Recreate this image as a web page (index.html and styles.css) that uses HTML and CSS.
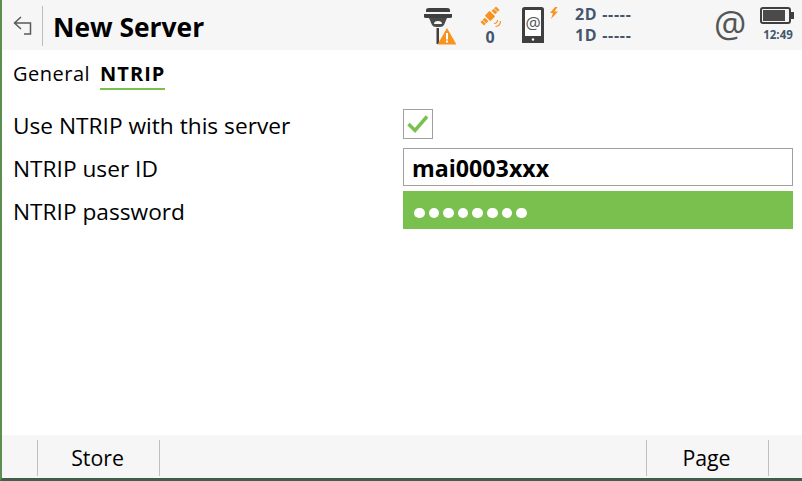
FILE: index.html
```html
<!DOCTYPE html>
<html lang="en">
<head>
<meta charset="utf-8">
<title>New Server</title>
<link rel="stylesheet" href="styles.css">
</head>
<body>
<div class="app">
  <header class="topbar">
    <button class="back" aria-label="Back">
      <svg width="24" height="24" viewBox="0 0 24 24" fill="none" stroke="#5a5a5a" stroke-width="1.500"><path d="M10 3 3.500 9 10 15M3.500 9H19.500V20H13"/></svg>
    </button>
    <h1 class="title">New Server</h1>
    <div class="status">
      <svg class="ic-rover" width="36" height="44" viewBox="0 0 36 44">
        <path d="M6 7Q6 5 9 5H27Q30 5 30 7V9H6Z" fill="#3f3f3f"/>
        <path d="M4 11H32V14Q32 15 30 15H6Q4 15 4 14Z" fill="#3f3f3f"/>
        <path d="M9 15H27L24 22Q23 24 20 24H16Q13 24 12 22Z" fill="#4a4a4a"/>
        <path d="M14 21Q14 18 18 18Q22 18 22 21Z" fill="#f6f6f6"/>
        <rect x="16.500" y="25" width="2.500" height="16" fill="#3f3f3f"/>
        <path d="M27 25 36.500 41.500H17.500Z" fill="#f7931e"/>
        <rect x="26" y="30" width="2" height="6.500" fill="#fff"/>
        <rect x="26" y="37.500" width="2" height="2" fill="#fff"/>
      </svg>
      <div class="sat">
        <svg width="24" height="24" viewBox="0 0 24 24">
          <g fill="#f7931e" transform="rotate(-45 12 11)">
            <rect x="8.500" y="7" width="7" height="8" rx="1"/>
            <rect x="1" y="8.500" width="2.600" height="5"/>
            <rect x="4.200" y="8.500" width="3" height="5"/>
            <rect x="16.800" y="8.500" width="3" height="5"/>
            <rect x="20.400" y="8.500" width="2.600" height="5"/>
          </g>
          <path d="M17.500 21.500Q22.500 21 22.500 16M16 18.500Q19.500 18.500 19.500 15" fill="none" stroke="#f7931e" stroke-width="1.200"/>
        </svg>
        <span class="sat-n">0</span>
      </div>
      <svg class="ic-phone" width="24" height="38" viewBox="0 0 24 38">
        <rect x="1.500" y="1.500" width="19" height="33" rx="1" fill="#fff" stroke="#3f3f3f" stroke-width="3"/>
        <rect x="0" y="29" width="22" height="7" fill="#3f3f3f"/>
        <circle cx="11" cy="32.500" r="1.200" fill="#fff"/>
        <text x="11" y="22" class="phone-at">@</text>
      </svg>
      <svg class="ic-bolt" width="10" height="12" viewBox="0 0 10 12"><path d="M6 0 1 6H4L2 12 9 4.500H5.500L8.500 0Z" fill="#f7931e"/></svg>
      <div class="dims">
        <span>2D -----</span>
        <span>1D -----</span>
      </div>
      <span class="at">@</span>
      <div class="batt">
        <svg width="36" height="18" viewBox="0 0 36 18" fill="none">
          <rect x="1" y="1" width="29" height="15" rx="2" stroke="#3f3f3f" stroke-width="2"/>
          <rect x="3" y="3" width="22" height="11" fill="#4a4a4a"/>
          <rect x="31" y="5" width="3" height="7" fill="#3f3f3f"/>
        </svg>
        <span class="time">12:49</span>
      </div>
    </div>
  </header>

  <nav class="tabs">
    <span class="tab">General</span>
    <span class="tab active">NTRIP</span>
  </nav>

  <main class="form">
    <div class="row">
      <label class="label">Use NTRIP with this server</label>
      <div class="check">
        <svg width="24" height="24" viewBox="0 0 24 24" fill="none"><path d="M2.500 12 9 18.500 21 4.500" stroke="#7ac04e" stroke-width="3.500"/></svg>
      </div>
    </div>
    <div class="row">
      <label class="label">NTRIP user ID</label>
      <div class="field">mai0003xxx</div>
    </div>
    <div class="row">
      <label class="label">NTRIP password</label>
      <div class="field pass">
        <i></i><i></i><i></i><i></i><i></i><i></i><i></i><i></i>
      </div>
    </div>
  </main>

  <footer class="softkeys">
    <div class="key small"></div>
    <div class="key store">Store</div>
    <div class="key grow"></div>
    <div class="key page">Page</div>
    <div class="key last"></div>
  </footer>
</div>
</body>
</html>
```

FILE: styles.css
```css
* { box-sizing: border-box; }
html, body { margin: 0; padding: 0; }
body {
  width: 802px;
  height: 481px;
  overflow: hidden;
  font-family: "Open Sans", "Noto Sans", sans-serif;
  color: #000;
  background: #fff;
}
.app {
  width: 802px;
  height: 481px;
  display: flex;
  flex-direction: column;
  border-left: 2px solid #5c8f4f;
  border-bottom: 3px solid #3f5f4a;
}
.topbar {
  height: 50px;
  flex: none;
  display: flex;
  align-items: center;
  background: #f6f6f6;
}
.back {
  width: 41px;
  height: 40px;
  flex: none;
  margin-top: 2px;
  padding: 0 0 1px 9px;
  display: flex;
  align-items: center;
  background: none;
  border: 0;
  border-right: 1px solid #bdbdbd;
}
.title {
  margin: 4px 0 0 10px;
  font-size: 26.400px;
  line-height: 34px;
  font-weight: 700;
  width: 367px;
  flex: none;
}
.status { display: flex; align-items: flex-start; height: 50px; }
.ic-rover { margin-top: 3px; flex: none; }
.sat {
  margin-left: 19px;
  width: 30px;
  display: flex;
  flex-direction: column;
  align-items: center;
  padding-top: 5px;
}
.sat-n {
  font-size: 16px;
  line-height: 16px;
  font-weight: 700;
  color: #44566b;
}
.ic-phone { margin: 7px 0 0 17px; flex: none; }
.phone-at {
  font-family: "Open Sans", sans-serif;
  font-size: 17px;
  fill: #555;
  text-anchor: middle;
}
.ic-bolt { margin: 7px 0 0 3px; flex: none; }
.dims {
  margin: 4px 0 0 16px;
  width: 139px;
  display: flex;
  flex-direction: column;
  font-size: 16px;
  line-height: 21px;
  letter-spacing: .7px;
  font-weight: 700;
  color: #44566b;
}
.at {
  margin-top: 3px;
  width: 46px;
  font-size: 36px;
  line-height: 42px;
  color: #555;
}
.batt {
  display: flex;
  flex-direction: column;
  align-items: center;
  padding-top: 7px;
  width: 36px;
}
.time {
  margin-top: 3px;
  font-size: 11.500px;
  line-height: 14px;
  font-weight: 700;
  color: #44566b;
}
.tabs {
  height: 41px;
  flex: none;
  display: flex;
  gap: 10px;
  padding: 10px 0 0 11px;
}
.tab {
  font-size: 20px;
  line-height: 28px;
  height: 30px;
  letter-spacing: .5px;
}
.tab.active {
  font-weight: 700;
  letter-spacing: 1px;
  border-bottom: 2px solid #7ac04e;
}
.form {
  flex: 1;
  padding: 14px 9px 0 11px;
  display: flex;
  flex-direction: column;
  gap: 5px;
}
.row {
  height: 38px;
  display: flex;
  align-items: center;
  justify-content: space-between;
}
.label { font-size: 22.700px; padding-top: 2px; }
.check {
  width: 30px;
  height: 30px;
  margin-right: 360px;
  border: 1px solid #a0a0a0;
  display: flex;
  align-items: center;
  justify-content: center;
}
.field {
  width: 390px;
  height: 38px;
  border: 1px solid #a0a0a0;
  padding-left: 8px;
  font-size: 23.200px;
  line-height: 38px;
  font-weight: 700;
}
.field.pass {
  border: 0;
  background: #7ac04e;
  padding: 6px 0 0 11px;
  display: flex;
  align-items: center;
  gap: 4px;
}
.field.pass i {
  width: 10.600px;
  height: 10.600px;
  border-radius: 50%;
  background: #fff;
}
.softkeys {
  height: 43px;
  flex: none;
  display: flex;
  background: #f6f6f6;
  padding-top: 5px;
}
.key {
  height: 36px;
  border-right: 1px solid #c0c0c0;
  font-size: 21.300px;
  line-height: 36px;
  text-align: center;
}
.key.small { width: 36px; }
.key.store { width: 122px; padding-right: 2px; }
.key.grow { flex: 1; }
.key.page { width: 122px; padding-right: 2px; }
.key.last { width: 33px; border: 0; }
```
